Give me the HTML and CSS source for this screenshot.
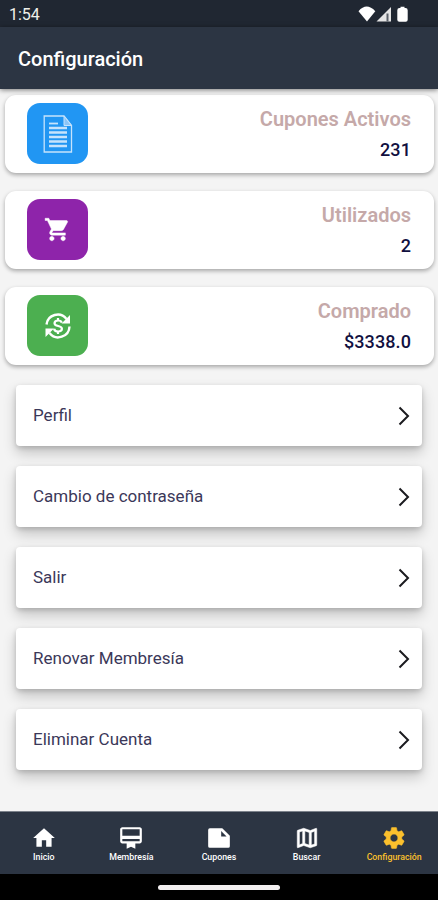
FILE: index.html
```html
<!DOCTYPE html>
<html lang="es">
<head>
  <meta charset="UTF-8" />
  <meta name="viewport" content="width=device-width, initial-scale=1.0"/>
  <title>Configuración</title>
  <link rel="stylesheet" href="styles.css">
</head>
<body>

  <div class="status-bar">
    <span class="time">1:54</span>
    <svg class="status-icons" width="50" height="18" viewBox="0 0 50 18">
      <path d="M.5 5.2Q8.500-4 17.300 5.200L9 15.500z" fill="#fff"/>
      <path d="M18.500 15.500L33 1v14.500z" fill="#e4e4e4"/>
      <path d="M28.500 7.500h2v8h-2z" fill="#5a6069"/>
      <path d="M41.500 2h1V.8h4V2h1q2.200 0 2.200 2.200v9.600q0 1.900-2 1.900h-6.400q-2 0-2-1.900V4.200q0-2.200 2.200-2.200z" fill="#fff"/>
    </svg>
  </div>

  <header class="app-bar">
    <h1>Configuración</h1>
  </header>

  <main class="content">
    <section class="stats">
      <div class="stat-card">
        <div class="stat-icon blue">
          <svg width="30" height="38" viewBox="0 0 30 38" fill="none" stroke="#c6e3fc" stroke-width="1.300">
            <path d="M1.200 1H21l7.500 9.500V37H1.200z"/>
            <path d="M21 1v9.500h7.500z" fill="#8cc5f8" stroke-width="1"/>
            <path d="M6 8.500h9" stroke-width="1.800"/>
            <path d="M6 13h18M6 17.500h18M6 22h18M6 26.500h18M6 31h18" stroke-width="2.600"/>
          </svg>
        </div>
        <div class="stat-text">
          <h2>Cupones Activos</h2>
          <p>231</p>
        </div>
      </div>

      <div class="stat-card">
        <div class="stat-icon purple">
          <svg width="27" height="27" viewBox="0 0 24 24" fill="#fff" stroke="#fff" stroke-width=".4">
            <path d="M7 18c-1.100 0-1.990.9-1.990 2S5.900 22 7 22s2-.9 2-2-.9-2-2-2zM1 2v2h2l3.600 7.590-1.350 2.450c-.16.28-.25.61-.25.96 0 1.100.9 2 2 2h12v-2H7.420c-.14 0-.25-.11-.25-.25l.03-.12.9-1.630h7.450c.75 0 1.410-.41 1.750-1.030l3.580-6.490A1 1 0 0 0 20 4H5.210l-.94-2H1zm16 16c-1.100 0-1.990.9-1.990 2s.89 2 1.990 2 2-.9 2-2-.9-2-2-2z"/>
          </svg>
        </div>
        <div class="stat-text">
          <h2>Utilizados</h2>
          <p>2</p>
        </div>
      </div>

      <div class="stat-card">
        <div class="stat-icon green">
          <svg width="28" height="28" viewBox="0 0 28 28" fill="none" stroke="#fff" stroke-width="2.400">
            <path d="M2.500 12.500A11.200 11.200 0 0 1 22.500 7"/>
            <path d="M25.500 14.500A11.200 11.200 0 0 1 5.500 21"/>
            <path d="M26 3v8.500h-8.500zM1.500 25v-8.500H10z" fill="#fff" stroke="none"/>
            <path d="M17.800 10.800c-.4-1.500-1.700-2.300-3.700-2.300-2.200 0-3.600 1-3.600 2.700 0 3.900 7.400 1.800 7.400 5.600 0 1.700-1.500 2.700-3.800 2.700-2.200 0-3.700-1-4-2.800M14 6v3M14 19v3" stroke-width="2.200"/>
          </svg>
        </div>
        <div class="stat-text">
          <h2>Comprado</h2>
          <p>$3338.0</p>
        </div>
      </div>
    </section>

    <section class="menu">
      <a class="menu-item">
        <span>Perfil</span>
        <svg class="chevron" viewBox="0 0 12 20"><path d="M1.500 1.500L10 10l-8.500 8.500"/></svg>
      </a>
      <a class="menu-item">
        <span>Cambio de contraseña</span>
        <svg class="chevron" viewBox="0 0 12 20"><path d="M1.500 1.500L10 10l-8.500 8.500"/></svg>
      </a>
      <a class="menu-item">
        <span>Salir</span>
        <svg class="chevron" viewBox="0 0 12 20"><path d="M1.500 1.500L10 10l-8.500 8.500"/></svg>
      </a>
      <a class="menu-item">
        <span>Renovar Membresía</span>
        <svg class="chevron" viewBox="0 0 12 20"><path d="M1.500 1.500L10 10l-8.500 8.500"/></svg>
      </a>
      <a class="menu-item">
        <span>Eliminar Cuenta</span>
        <svg class="chevron" viewBox="0 0 12 20"><path d="M1.500 1.500L10 10l-8.500 8.500"/></svg>
      </a>
    </section>
  </main>

  <nav class="bottom-nav">
    <a class="nav-item">
      <svg viewBox="0 0 24 24"><path d="M10 20v-6h4v6h5v-8h3L12 3 2 12h3v8z"/></svg>
      <span>Inicio</span>
    </a>
    <a class="nav-item">
      <svg viewBox="0 0 24 24"><path d="M20 2H4c-1.110 0-2 .89-2 2v11c0 1.110.89 2 2 2h4v5l4-2 4 2v-5h4c1.110 0 2-.89 2-2V4c0-1.110-.89-2-2-2zm0 13H4v-2h16v2zm0-5H4V4h16v6z"/></svg>
      <span>Membresía</span>
    </a>
    <a class="nav-item">
      <svg viewBox="0 0 24 24"><path d="M3.500 3A1.500 1.500 0 0 0 2 4.500v15A1.500 1.500 0 0 0 3.500 21h17a1.500 1.500 0 0 0 1.500-1.500V10l-7-7z"/><path d="M14 5.500v5h5z" fill="#2c3543"/></svg>
      <span>Cupones</span>
    </a>
    <a class="nav-item">
      <svg class="bold" viewBox="0 0 24 24"><path d="M20.500 3l-.16.03L15 5.100 9 3 3.360 4.900c-.21.07-.36.25-.36.48V20.500c0 .28.22.5.5.5l.16-.03L9 18.900l6 2.100 5.640-1.900c.21-.07.36-.25.36-.48V3.500c0-.28-.22-.5-.5-.5zM10 5.470l4 1.400v11.660l-4-1.400V5.470zm-5 .99l3-1.010v11.700l-3 1.160V6.460zm14 11.080l-3 1.010V6.860l3-1.160v11.840z"/></svg>
      <span>Buscar</span>
    </a>
    <a class="nav-item active">
      <svg class="bold" viewBox="0 0 24 24"><path d="M19.140 12.940c.04-.3.060-.61.060-.94 0-.32-.02-.64-.07-.94l2.030-1.580c.18-.14.23-.41.12-.61l-1.920-3.320c-.12-.22-.37-.29-.59-.22l-2.390.96c-.5-.38-1.030-.7-1.620-.94l-.36-2.540c-.04-.24-.24-.41-.48-.41h-3.840c-.24 0-.43.17-.47.41l-.36 2.540c-.59.24-1.130.57-1.620.94l-2.390-.96c-.22-.08-.47 0-.59.22L2.740 8.870c-.12.21-.08.47.12.61l2.030 1.580c-.05.3-.09.63-.09.94s.02.64.07.94l-2.030 1.580c-.18.14-.23.41-.12.61l1.920 3.320c.12.22.37.29.59.22l2.390-.96c.5.38 1.030.7 1.620.94l.36 2.540c.05.24.24.41.48.41h3.840c.24 0 .44-.17.47-.41l.36-2.540c.59-.24 1.130-.56 1.620-.94l2.390.96c.22.08.47 0 .59-.22l1.920-3.320c.12-.22.07-.47-.12-.61l-2.010-1.580zM12 15.600c-1.980 0-3.600-1.620-3.600-3.600s1.620-3.600 3.600-3.600 3.600 1.620 3.600 3.600-1.620 3.600-3.600 3.600z"/></svg>
      <span>Configuración</span>
    </a>
  </nav>

  <div class="gesture-bar"><div class="handle"></div></div>

</body>
</html>
```
FILE: styles.css
```css
* {
  margin: 0;
  padding: 0;
  box-sizing: border-box;
}

body {
  font-family: Roboto, 'Liberation Sans', sans-serif;
  background: #f4f4f4;
  height: 900px;
  display: flex;
  flex-direction: column;
  overflow: hidden;
}

.status-bar {
  height: 27px;
  flex: none;
  background: #202732;
  display: flex;
  justify-content: space-between;
  padding: 6px 30px 0 9px;
}

.time {
  color: #f0f0ea;
  font-size: 16px;
  line-height: 18px;
}

.app-bar {
  height: 62px;
  flex: none;
  background: #2c3543;
  display: flex;
  align-items: center;
  padding: 2px 18px 0;
  box-shadow: 0 1px 5px rgba(0, 0, 0, 0.5);
  z-index: 1;
}

h1 {
  color: #fff;
  font-size: 20px;
  font-weight: 500;
}

.content {
  flex: 1;
}

.stats {
  padding: 6px 4px 0 5px;
  display: flex;
  flex-direction: column;
  gap: 18px;
}

.stat-card {
  height: 78px;
  background: #fff;
  border-radius: 11px;
  box-shadow: 0 2px 4px rgba(0, 0, 0, 0.32);
  display: flex;
  justify-content: space-between;
  padding: 8px 23px 0 22px;
}

.stat-icon {
  width: 61px;
  height: 61px;
  border-radius: 13px;
  display: flex;
  justify-content: center;
  align-items: center;
}

.blue {
  background: #2196f3;
}

.purple {
  background: #8e24aa;
}

.green {
  background: #4caf50;
}

.stat-text {
  text-align: right;
  padding-top: 4px;
}

.stat-text h2 {
  color: #c5a9a9;
  font-size: 20px;
  font-weight: 600;
  line-height: 24px;
}

.stat-text p {
  color: #11103f;
  font-size: 18px;
  font-weight: 500;
  line-height: 22px;
  margin-top: 8px;
  letter-spacing: 0.1px;
}

.menu {
  padding: 20px 16px 0;
  display: flex;
  flex-direction: column;
  gap: 20px;
}

.menu-item {
  height: 61px;
  background: #fff;
  border-radius: 4px;
  box-shadow: 0 7px 14px rgba(0, 0, 0, 0.2), 0 2px 5px rgba(0, 0, 0, 0.16);
  display: flex;
  justify-content: space-between;
  align-items: center;
  padding: 0 12px 0 17px;
  color: #3b3859;
  font-size: 17px;
}

.menu-item span {
  padding-bottom: 2px;
}

.chevron {
  width: 12px;
  height: 20px;
  fill: none;
  stroke: #1b1b1f;
  stroke-width: 2;
}

.bottom-nav {
  height: 63px;
  flex: none;
  background: #2c3543;
  border-top: 1px solid #7c828b;
  display: flex;
}

.nav-item {
  flex: 1;
  display: flex;
  flex-direction: column;
  align-items: center;
  padding-top: 13px;
  color: #fff;
  font-size: 8.8px;
  font-weight: 500;
  line-height: 12px;
}

.nav-item svg {
  width: 26px;
  height: 26px;
  fill: currentColor;
}

.nav-item .bold {
  stroke: currentColor;
  stroke-width: 0.5;
}

.nav-item.active {
  color: #fbc02d;
}

.gesture-bar {
  height: 26px;
  flex: none;
  background: #000;
  display: flex;
  justify-content: center;
  align-items: center;
}

.handle {
  width: 122px;
  height: 5px;
  border-radius: 3px;
  background: #f2eff0;
}
```
